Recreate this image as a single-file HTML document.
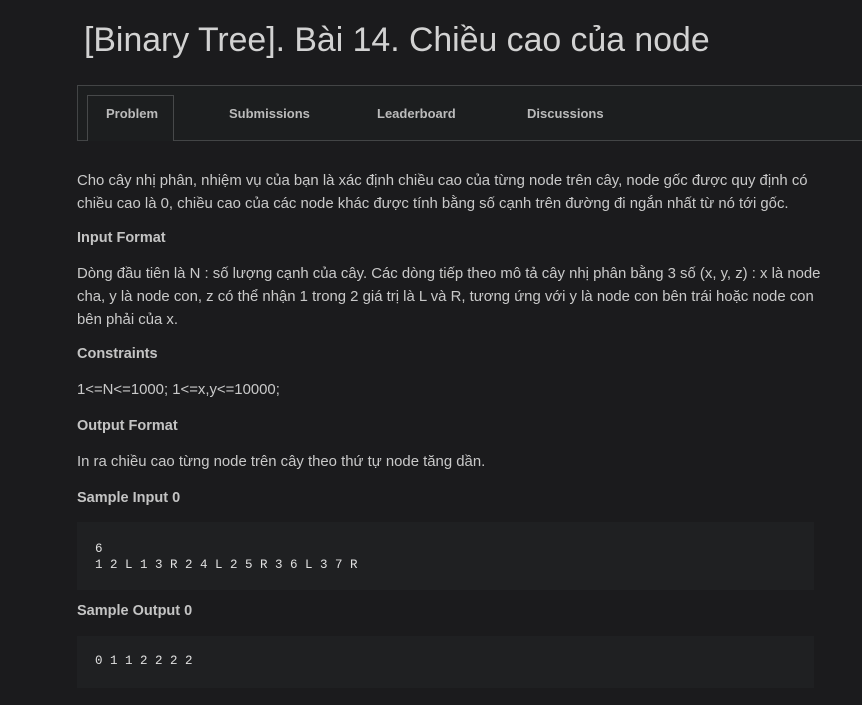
<!DOCTYPE html>
<html><head><meta charset="utf-8"><style>
html,body{margin:0;padding:0;background:#1b1b1d;width:862px;height:705px;overflow:hidden;font-family:"Liberation Sans",sans-serif;color:#c9c9c9}
.title{position:absolute;left:84px;top:21px;font-size:33.8px;color:#d2d2d2}
.tabs{position:absolute;left:77px;top:85px;width:800px;height:54px;border:1px solid #434546;background:#1c1e1f}
.tab{position:absolute;top:20px;font-size:13px;font-weight:bold;color:#bbb}
.active{position:absolute;left:9px;top:9px;width:85px;height:45px;border:1px solid #47494a;border-bottom:none;background:#1c1e1f}
.p{position:absolute;left:77px;font-size:14.9px;line-height:23px;width:745px}
.h{position:absolute;left:77px;font-size:14.5px;font-weight:bold;color:#c4c4c4}
.code{position:absolute;left:77px;width:737px;background:#1f2022;font-family:"Liberation Mono",monospace;font-size:12.5px;color:#e0e0e0;line-height:16px}
</style></head><body>
<div class="title">[Binary Tree]. Bài 14. Chiều cao của node</div>
<div class="tabs">
<div class="active"></div>
<div class="tab" style="left:28px">Problem</div>
<div class="tab" style="left:151px">Submissions</div>
<div class="tab" style="left:299px">Leaderboard</div>
<div class="tab" style="left:449px">Discussions</div>
</div>
<div class="p" style="top:170px">Cho cây nhị phân, nhiệm vụ của bạn là xác định chiều cao của từng node trên cây, node gốc được quy định có chiều cao là 0, chiều cao của các node khác được tính bằng số cạnh trên đường đi ngắn nhất từ nó tới gốc.</div>
<div class="h" style="top:230px">Input Format</div>
<div class="p" style="top:263px">Dòng đầu tiên là N : số lượng cạnh của cây. Các dòng tiếp theo mô tả cây nhị phân bằng 3 số (x, y, z) : x là node cha, y là node con, z có thể nhận 1 trong 2 giá trị là L và R, tương ứng với y là node con bên trái hoặc node con bên phải của x.</div>
<div class="h" style="top:346px">Constraints</div>
<div class="p" style="top:379px">1&lt;=N&lt;=1000; 1&lt;=x,y&lt;=10000;</div>
<div class="h" style="top:418px">Output Format</div>
<div class="p" style="top:451px">In ra chiều cao từng node trên cây theo thứ tự node tăng dần.</div>
<div class="h" style="top:490px">Sample Input 0</div>
<div class="code" style="top:522px;height:68px"><div style="position:absolute;left:18px;top:19px;white-space:pre">6
1 2 L 1 3 R 2 4 L 2 5 R 3 6 L 3 7 R</div></div>
<div class="h" style="top:603px">Sample Output 0</div>
<div class="code" style="top:636px;height:52px"><div style="position:absolute;left:18px;top:17px;white-space:pre">0 1 1 2 2 2 2</div></div>
</body></html>
